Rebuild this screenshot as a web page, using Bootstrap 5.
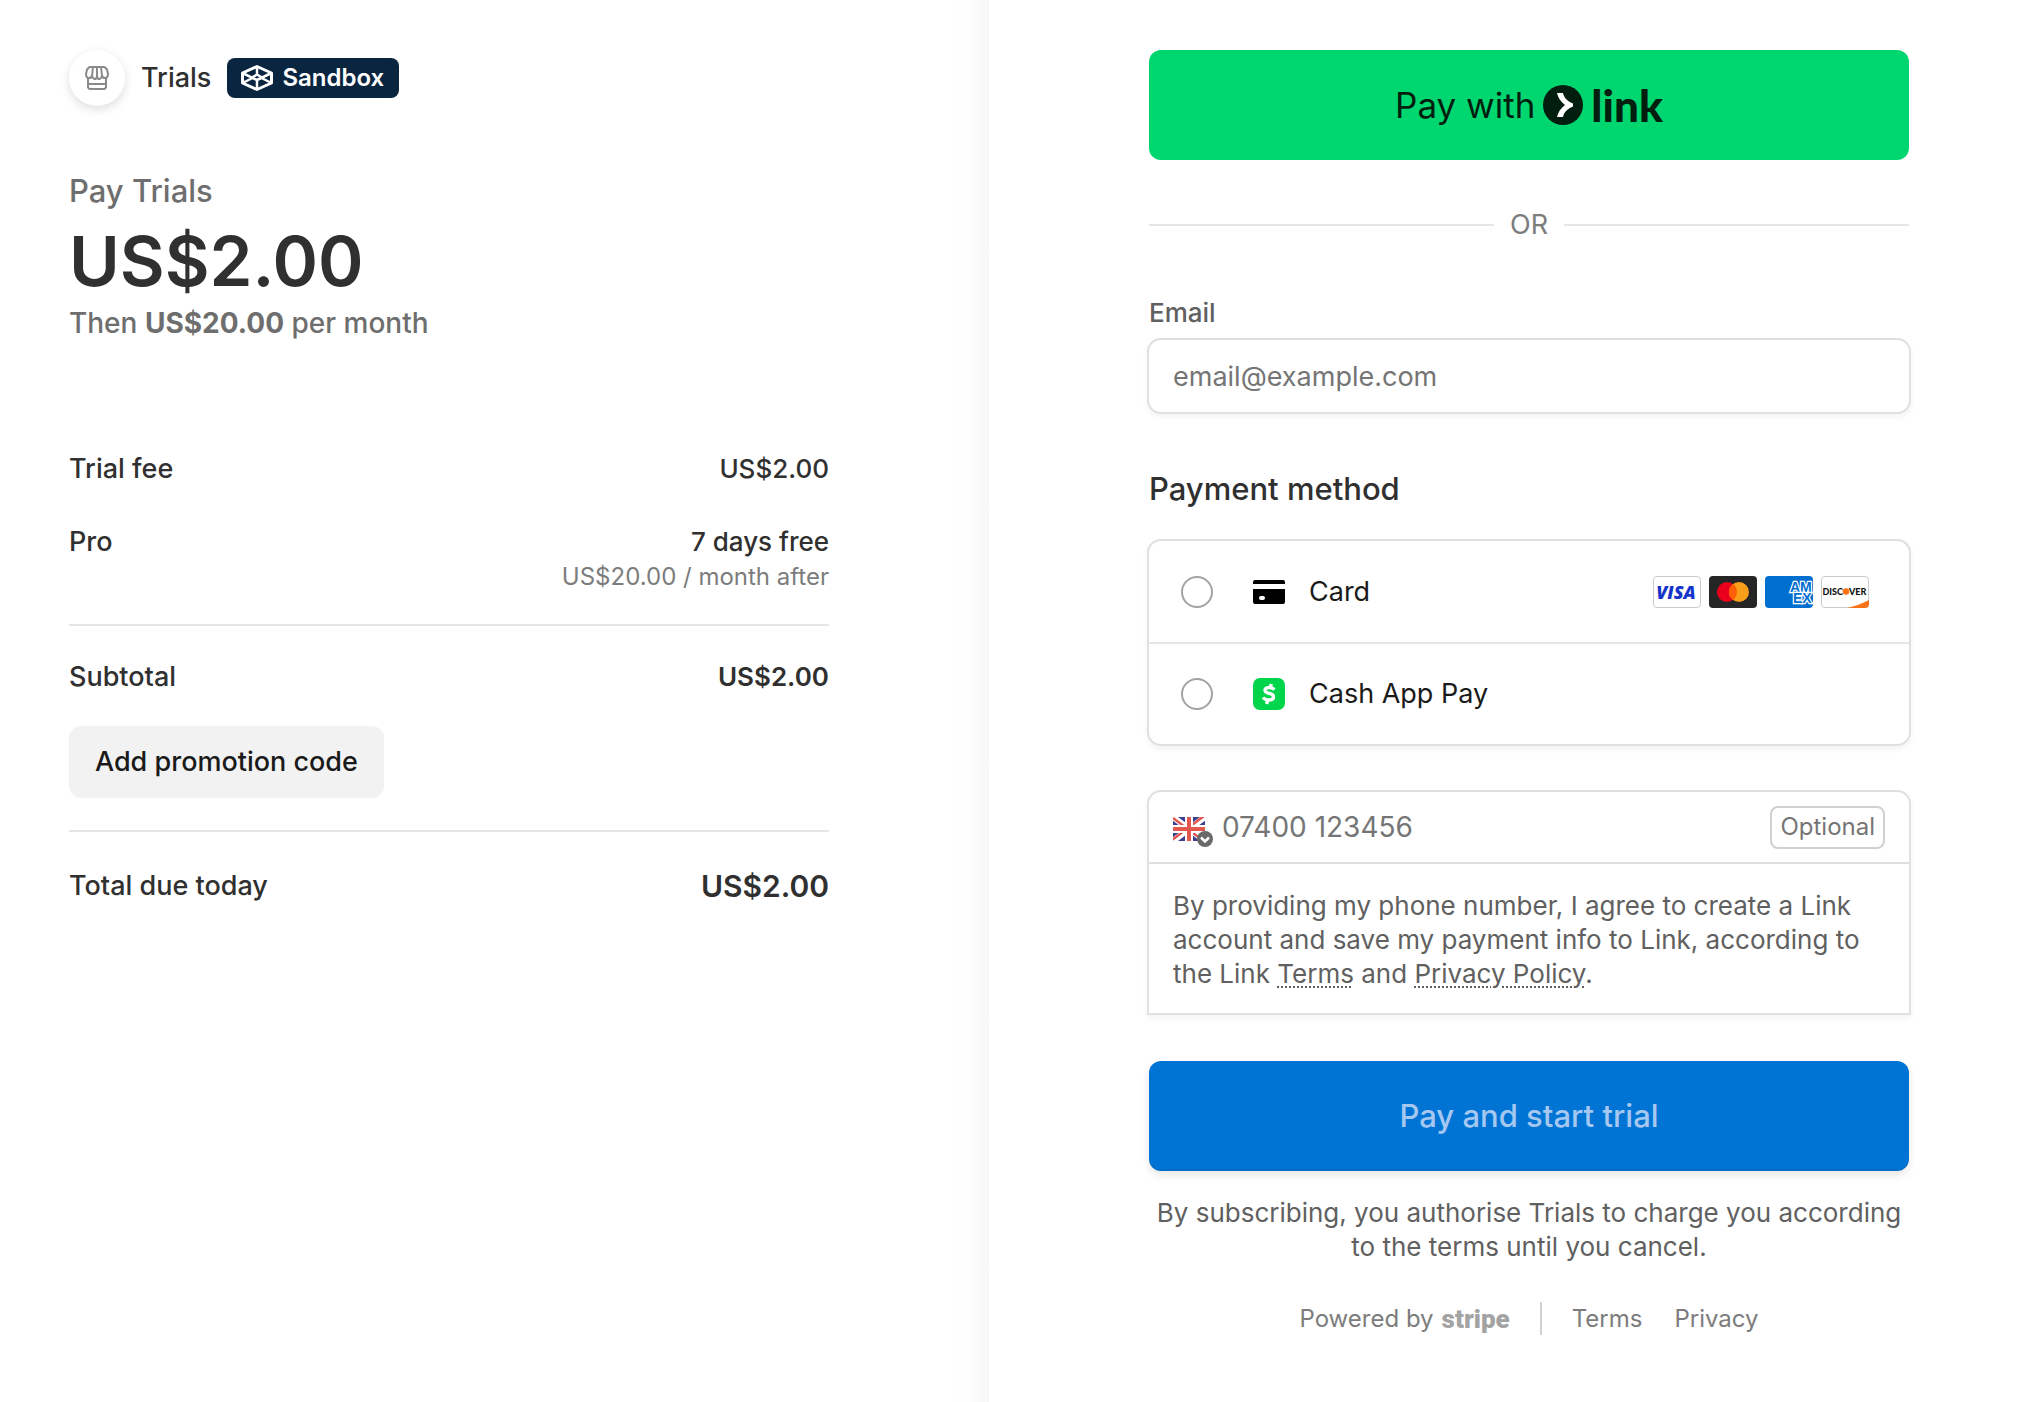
<!DOCTYPE html>
<html lang="en">
<head>
<meta charset="utf-8">
<meta name="viewport" content="width=device-width, initial-scale=1">
<title>Trials checkout</title>
<link href="https://cdn.jsdelivr.net/npm/bootstrap@5.3.0/dist/css/bootstrap.min.css" rel="stylesheet">
<style>
  body { font-family: Inter, "Liberation Sans", sans-serif; font-size: 27px; line-height: 36px; color: #303030; background: #fff; }
  .checkout { min-height: 100vh; display: grid; grid-template-columns: 989fr 1055fr; }
  .summary { padding: 50px 160px 40px 69px; background: linear-gradient(to left, rgba(0,0,0,.03), rgba(0,0,0,.008) 20px, rgba(0,0,0,0) 40px); }
  .pay { padding: 50px 135px 60px 160px; }
  .shop-icon { width: 56px; height: 56px; box-shadow: 0 3px 8px rgba(0,0,0,.09), 0 4px 14px rgba(0,0,0,.05); }
  .sandbox { background: #0a2540; color: #fff; border-radius: 8px; height: 40px; font-size: 24px; padding: 0 15px 0 13px; }
  .soft { color: #6e6e6e; }
  .softer { color: #7c7c7c; }
  .pay-title { font-size: 31px; line-height: 40px; margin-top: 65px; }
  .price { font-size: 69px; line-height: 88px; font-weight: 600; margin-top: 6px; }
  .then { font-size: 28px; }
  .lines { margin-top: 110px; }
  .amount { font-size: 26px; }
  .pro-line { margin-top: 37px; margin-bottom: 30px; }
  .after { font-size: 24px; line-height: 34px; }
  .rule { border-top: 2px solid #e6e6e6; }
  .sub-line { margin: 33px 0 31px; }
  .promo { --bs-btn-bg: #f2f2f2; --bs-btn-border-color: #f2f2f2; --bs-btn-color: #1a1a1a; --bs-btn-hover-bg: #eaeaea; font-size: 27px; line-height: 36px; font-weight: 500; border-radius: 12px; padding: 17px 25px; margin-bottom: 32px; }
  .total-line { margin-top: 36px; }
  .total { font-size: 30px; font-weight: 600; }
  .link-btn { background: #00d66f; color: #011e0f; height: 110px; border-radius: 12px; font-size: 35px; border: 0; }
  .link-btn:hover { background: #00c767; color: #011e0f; }
  .link-word { font-family: Lato, sans-serif; font-weight: 900; font-size: 44px; line-height: 44px; }
  .or-row { margin: 47px 0 54px; }
  .email-label { font-size: 26px; line-height: 32px; font-weight: 500; color: #606060; margin-bottom: 9px; }
  .box { border: 2px solid #e0e0e0; border-radius: 14px; box-shadow: 0 3px 6px rgba(0,0,0,.05); background: #fff; margin-left: -2px; margin-right: -2px; }
  .field { height: 76px; width: calc(100% + 4px); font-size: 27px; padding: 0 24px; color: #303030; }
  .field::placeholder, .phone::placeholder { color: #757575; opacity: 1; }
  .section-title { font-size: 31px; line-height: 40px; font-weight: 500; margin: 55px 0 30px; }
  .method { height: 101px; padding: 0 40px 0 32px; color: #1a1a1a; cursor: pointer; }
  .method + .method { height: 102px; border-top: 2px solid #e6e6e6; }
  .method .form-check-input { width: 32px; height: 32px; margin: 0 40px 0 0; border: 2px solid #a3a3a3; flex: none; }
  .method-name { margin-left: 24px; }
  .phone-box { border-radius: 14px 14px 0 0; margin-top: 44px; }
  .phone-row { height: 72px; padding: 0 24px; border-bottom: 2px solid #e0e0e0; }
  .phone { font-size: 28px; padding: 0; height: 60px; }
  .country { width: 49px; height: 40px; flex: none; }
  .country select { position: absolute; inset: 0; width: 100%; opacity: 0; }
  .optional { border: 2px solid #d0d0d0; border-radius: 8px; font-size: 24px; line-height: 30px; padding: 4px 8px 5px; color: #757575; }
  .fine { font-size: 26px; line-height: 34px; color: #606060; }
  .consent { padding: 25px 24px 22px; }
  .fine a { color: inherit; text-decoration: underline dotted 2px; text-underline-offset: 3px; }
  .submit { height: 110px; border-radius: 12px; font-size: 31px; font-weight: 500; margin: 46px 0 25px; box-shadow: 0 4px 8px rgba(0,0,0,.1), inset 0 -2px 1px rgba(0,0,0,.06);
    --bs-btn-border-width: 0; --bs-btn-disabled-bg: #0074d4; --bs-btn-disabled-color: #a6c8f0; --bs-btn-disabled-opacity: 1; }
  .foot { font-size: 24px; line-height: 32px; margin-top: 38px; }
  .foot a { color: inherit; text-decoration: none; }
  .stripe-word { font-family: Roboto, "Liberation Sans", sans-serif; font-weight: 900; font-size: 26px; color: #a3a3a3; }
  .stem { width: 2px; height: 33px; background: #d0d0d0; margin: 0 30px; }
  .foot-gap { margin-left: 32px; }
  svg { display: block; flex: none; }
  @media (max-width: 1200px) { .checkout { grid-template-columns: 1fr; } .summary, .pay { padding: 32px; background: none; } }
</style>
</head>
<body>
<main class="checkout">
  <section class="summary">
    <header class="d-flex align-items-center">
      <span class="shop-icon rounded-circle bg-white d-flex align-items-center justify-content-center">
        <svg width="24" height="24" viewBox="0 0 24 24" fill="none" stroke="#8a8a8a" stroke-width="2" stroke-linejoin="round"><path d="M4.500 1h15L22 3.500 23 8c0 2.500-1.300 4-3 4-1.600 0-2.800-1-3-2.500C16.800 11 15.600 13 14.500 13S12.200 12 12 10.500C11.800 12 10.600 13 9.500 13S7.200 11 7 9.500C6.800 11 5.600 12 4 12c-1.700 0-3-1.500-3-4l1-4.500zM8 1L7 10M12 1v10M16 1l1 9M3 12v9.500L4.500 23h15l1.500-1.500V12M3 18h18"/></svg>
      </span>
      <span class="fw-medium ms-3">Trials</span>
      <span class="sandbox d-inline-flex align-items-center fw-semibold ms-3">
        <svg class="me-2" width="34" height="28" viewBox="0 0 34 28" fill="none" stroke="#fff" stroke-width="3" stroke-linejoin="round"><path d="M17 2.500L31.500 9v10L17 25.500 2.500 19V9z"/><path stroke-width="2.500" d="M2.500 9L17 16l14.500-7M17 2.500v7M17 16v9M2.500 19l10-5M31.500 19l-10-5M12 13.500l5-3 5 3"/></svg>
        Sandbox
      </span>
    </header>
    <div class="pay-title soft fw-medium">Pay Trials</div>
    <div class="price">US$2.00</div>
    <div class="then soft fw-medium">Then <span class="fw-bold">US$20.00</span> per month</div>

    <div class="lines fw-medium">
      <div class="d-flex justify-content-between"><span>Trial fee</span><span class="amount">US$2.00</span></div>
      <div class="pro-line d-flex justify-content-between">
        <span>Pro</span>
        <span class="amount text-end">7 days free<span class="after softer d-block fw-normal">US$20.00 / month after</span></span>
      </div>
      <div class="rule"></div>
      <div class="sub-line d-flex justify-content-between"><span>Subtotal</span><span class="amount fw-semibold">US$2.00</span></div>
      <button type="button" class="btn promo">Add promotion code</button>
      <div class="rule"></div>
      <div class="total-line d-flex justify-content-between align-items-center"><span>Total due today</span><span class="total">US$2.00</span></div>
    </div>
  </section>

  <section class="pay">
    <button type="button" class="btn link-btn w-100 d-flex align-items-center justify-content-center">
      <span>Pay with</span>
      <svg class="mx-2" width="40" height="40" viewBox="0 0 40 40"><circle cx="20" cy="20" r="20" fill="#011e0f"/><path d="M14 8h6c1 4.500 4 8 10 10.500v3C24 24 21 27.500 20 32h-6c1-5 4-9 8-12-4-3-7-7-8-12z" fill="#fff"/></svg>
      <span class="link-word">link</span>
    </button>
    <div class="or-row d-flex align-items-center gap-3"><span class="rule flex-grow-1"></span><span class="softer">OR</span><span class="rule flex-grow-1"></span></div>
    <form>
      <label for="email" class="email-label d-block">Email</label>
      <input id="email" type="email" class="form-control box field" placeholder="email@example.com">

      <h2 class="section-title">Payment method</h2>
      <div class="box">
        <label class="method d-flex align-items-center" for="pm-card">
          <input class="form-check-input" type="radio" name="method" id="pm-card">
          <svg width="32" height="32" viewBox="0 0 32 32"><path d="M2 4h28a2 2 0 0 1 2 2v2H0V6a2 2 0 0 1 2-2zM0 13h32v13a2 2 0 0 1-2 2H2a2 2 0 0 1-2-2z"/><rect x="6" y="20" width="6" height="4" rx="2" fill="#fff"/></svg>
          <span class="method-name">Card</span>
          <span class="ms-auto d-flex gap-2">
            <svg width="48" height="32" viewBox="0 0 48 32" role="img" aria-label="Visa"><rect x=".5" y=".5" width="47" height="31" rx="3.500" fill="#fff" stroke="#ccc"/><text x="23" y="22.500" text-anchor="middle" font-family="Open Sans, sans-serif" font-weight="800" font-style="italic" font-size="18" fill="#1434cb">VISA</text></svg>
            <svg width="48" height="32" viewBox="0 0 48 32" role="img" aria-label="Mastercard"><rect width="48" height="32" rx="4" fill="#252525"/><circle cx="18" cy="16" r="10" fill="#eb001b"/><circle cx="30" cy="16" r="10" fill="#f79e1b"/><path d="M24 8a10 10 0 0 1 0 16 10 10 0 0 1 0-16z" fill="#ff5f00"/></svg>
            <svg width="48" height="32" viewBox="0 0 48 32" role="img" aria-label="American Express"><rect width="48" height="32" rx="4" fill="#016fd0"/><g font-family="Liberation Sans, sans-serif" font-weight="700" font-size="14" fill="#016fd0" stroke="#fff" stroke-width="2.400" paint-order="stroke"><text x="25" y="15.500">AM</text><text x="28" y="26.500">EX</text></g></svg>
            <svg width="48" height="32" viewBox="0 0 48 32" role="img" aria-label="Discover"><rect x=".5" y=".5" width="47" height="31" rx="3.500" fill="#fff" stroke="#ccc"/><path d="M26 32c8-1.500 15-4.500 22-8v4a4 4 0 0 1-4 4z" fill="#f97316"/><circle cx="25" cy="15.500" r="3.300" fill="#f97316"/><g font-family="Lato, sans-serif" font-weight="900" font-size="9" fill="#111"><text x="1.500" y="19">DISC</text><text x="28" y="19">VER</text></g></svg>
          </span>
        </label>
        <label class="method d-flex align-items-center" for="pm-cash">
          <input class="form-check-input" type="radio" name="method" id="pm-cash">
          <svg width="32" height="32" viewBox="0 0 32 32"><rect width="32" height="32" rx="7" fill="#00d54b"/><path d="M21.500 11.500c-3-2.600-9.500-2.800-9.500.8 0 4.200 8.500 2 8.500 6.400 0 4.300-7.500 4.300-10.500.8M18.300 6l-.8 3.500M14.500 22.500l-.8 3.500" fill="none" stroke="#fff" stroke-width="3.400"/></svg>
          <span class="method-name">Cash App Pay</span>
        </label>
      </div>

      <div class="box phone-box">
        <div class="phone-row d-flex align-items-center">
          <span class="country position-relative">
            <svg width="40" height="40" viewBox="0 0 40 40"><clipPath id="flag-edge"><path d="M0 0h32v24H0z"/></clipPath><g transform="translate(0 10)"><g clip-path="url(#flag-edge)"><path fill="#3c3f8f" d="M0 0h32v24H0z"/><path d="M0 0l32 24M32 0L0 24" stroke="#fff" stroke-width="6"/><path d="M0 1l32 24M31-1L-1 23" stroke="#e4574f" stroke-width="2.500"/><path fill="#fff" d="M12 0h8v24h-8zM0 8h32v8H0z"/><path fill="#e4574f" d="M14 0h4v24h-4zM0 10h32v4H0z"/></g></g><circle cx="32" cy="32" r="8" fill="#6a6a6a"/><path d="M28 30.500l4 4 4-4" fill="none" stroke="#fff" stroke-width="2.500"/></svg>
            <select aria-label="Country"><option>GB</option></select>
          </span>
          <input type="tel" class="phone form-control border-0 bg-transparent" placeholder="07400 123456" aria-label="Phone number">
          <span class="optional">Optional</span>
        </div>
        <p class="fine consent m-0">By providing my phone number, I agree to create a Link account and save my payment info to Link, according to the Link <a href="#">Terms</a> and <a href="#">Privacy Policy</a>.</p>
      </div>

      <button type="submit" class="btn btn-primary submit w-100" disabled>Pay and start trial</button>
      <p class="fine text-center m-0">By subscribing, you authorise Trials to charge you according to the terms until you cancel.</p>
    </form>
    <footer class="foot softer d-flex align-items-center justify-content-center">
      <span>Powered by</span><span class="stripe-word ms-2">stripe</span>
      <span class="stem"></span>
      <a href="#">Terms</a><a href="#" class="foot-gap">Privacy</a>
    </footer>
  </section>
</main>
<script src="https://cdn.jsdelivr.net/npm/bootstrap@5.3.0/dist/js/bootstrap.bundle.min.js"></script>
</body>
</html>
